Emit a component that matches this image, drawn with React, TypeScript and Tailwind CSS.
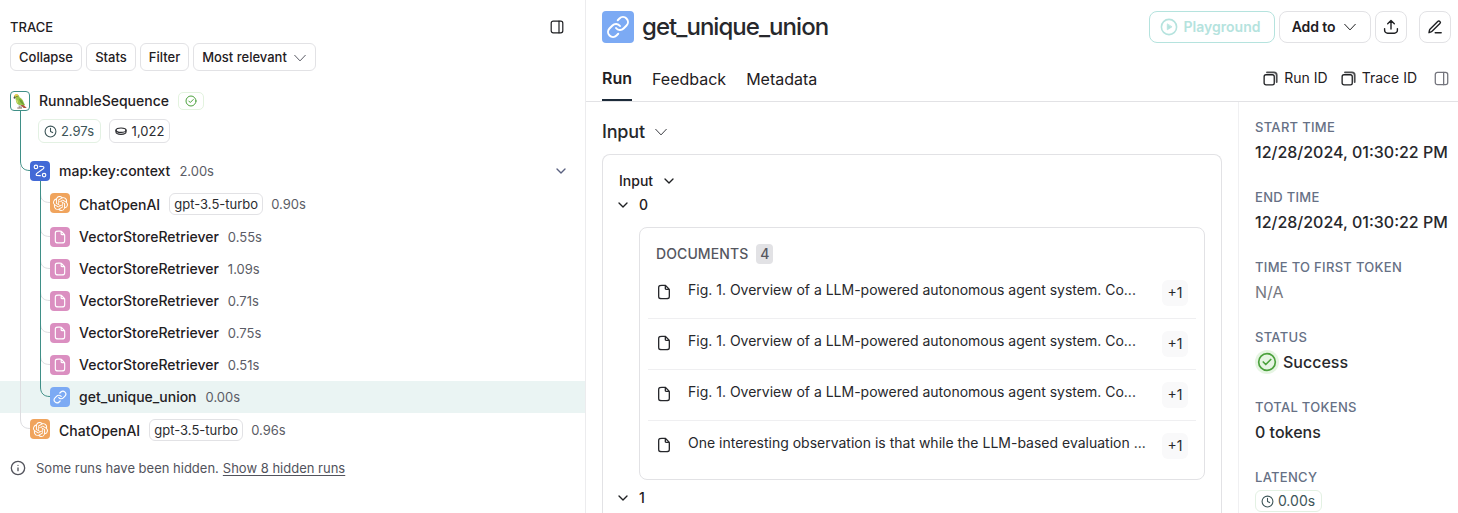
import React from "react";
import { SiOpenai } from "react-icons/si";

type IconProps = { className?: string };

const stroke = {
  fill: "none",
  stroke: "currentColor",
  strokeLinecap: "round" as const,
  strokeLinejoin: "round" as const,
};

const Chevron = ({ className, width = 2 }: IconProps & { width?: number }) => (
  <svg viewBox="0 0 24 24" className={className} {...stroke} strokeWidth={width}>
    <path d="M6 9l6 6 6-6" />
  </svg>
);

const WideChevron = ({ className }: IconProps) => (
  <svg viewBox="0 0 14 14" className={className} {...stroke} strokeWidth={1}>
    <path d="M1.7 4.3L7 9.9l5.3-5.6" />
  </svg>
);

const FileIcon = ({ className }: IconProps) => (
  <svg viewBox="0 0 24 24" className={className} {...stroke} strokeWidth={2}>
    <path d="M14 2.27V6.4c0 .56 0 .84.11 1.05a1 1 0 0 0 .44.44c.21.11.49.11 1.05.11h4.13M20 9.99V17.2c0 1.68 0 2.52-.33 3.16a3 3 0 0 1-1.31 1.31c-.64.33-1.48.33-3.16.33H8.8c-1.68 0-2.52 0-3.16-.33a3 3 0 0 1-1.31-1.31C4 19.72 4 18.88 4 17.2V6.8c0-1.68 0-2.52.33-3.16a3 3 0 0 1 1.31-1.31C6.28 2 7.12 2 8.8 2h3.21c.73 0 1.1 0 1.44.08.31.08.6.2.87.36.3.19.56.45 1.08.96l3.2 3.2c.52.52.78.78.96 1.08.17.27.29.56.36.87.08.34.08.71.08 1.44z" />
  </svg>
);

const LinkIcon = ({ className }: IconProps) => (
  <svg viewBox="0 0 24 24" className={className} {...stroke} strokeWidth={2}>
    <path d="M10 13a5 5 0 0 0 7.54.54l3-3a5 5 0 0 0-7.07-7.07l-1.72 1.71" />
    <path d="M14 11a5 5 0 0 0-7.54-.54l-3 3a5 5 0 0 0 7.07 7.07l1.71-1.71" />
  </svg>
);

const SidebarIcon = ({ className }: IconProps) => (
  <svg viewBox="0 0 14 14" className={className} {...stroke} strokeWidth={1.2}>
    <rect x="1.2" y="1.2" width="11.6" height="11.6" rx="2" />
    <path d="M9 1.2v11.6" />
  </svg>
);

const CopyIcon = ({ className }: IconProps) => (
  <svg viewBox="0 0 16 16" className={className} {...stroke} strokeWidth={1.4}>
    <rect x="1.2" y="4" width="10.8" height="10.8" rx="2" />
    <path d="M4.2 1.4h7.4a3 3 0 0 1 3 3v7.4" strokeWidth={1.9} className="opacity-80" />
  </svg>
);

const ClockIcon = ({ className }: IconProps) => (
  <svg viewBox="0 0 24 24" className={className} {...stroke} strokeWidth={2}>
    <circle cx="12" cy="12" r="10" />
    <path d="M12 6v6l4 2" />
  </svg>
);

const CheckCircle = ({ className, width = 2 }: IconProps & { width?: number }) => (
  <svg viewBox="0 0 24 24" className={className} {...stroke} strokeWidth={width}>
    <circle cx="12" cy="12" r="10" />
    <path d="M7.5 12l3 3 6-6" />
  </svg>
);

const CoinsIcon = ({ className }: IconProps) => (
  <svg viewBox="0 0 12 10" className={className} {...stroke} strokeWidth={1.2}>
    <ellipse cx="6" cy="4.2" rx="5" ry="2.2" />
    <path d="M1 4.2v1.900c0 1.300 2.200 2.200 5 2.200s5-.9 5-2.200V4.200" />
  </svg>
);

const RouteIcon = ({ className }: IconProps) => (
  <svg viewBox="0 0 24 24" className={className} {...stroke} strokeWidth={2}>
    <circle cx="5" cy="5" r="3" />
    <circle cx="19" cy="19" r="3" />
    <path d="M11.5 5h.9c3.2 0 4.8 0 5.4.6a2.5 2.5 0 0 1 .8 2.2c-.1.9-1.4 1.8-4 3.6l-5.1 3.5c-2.6 1.9-3.9 2.8-4 3.7a2.5 2.5 0 0 0 .8 2.2c.6.2 2.2.2 5.4.2h.8" transform="translate(0 -1)" />
  </svg>
);

const InfoIcon = ({ className }: IconProps) => (
  <svg viewBox="0 0 24 24" className={className} {...stroke} strokeWidth={2}>
    <circle cx="12" cy="12" r="10" />
    <path d="M12 16v-4M12 8h.01" />
  </svg>
);

const ParrotIcon = ({ className }: IconProps) => (
  <svg viewBox="0 0 18 18" className={className}>
    <path d="M10.600 11l5 4.800-3.200 0-3.600-3z" fill="#b0523c" />
    <path d="M7.600 13.200l.2 2.400M9.400 13.200l.2 2.400" stroke="#777" strokeWidth=".9" fill="none" />
    <path d="M5.600 15.900h5" stroke="#8a6f5c" strokeWidth="1.100" />
    <path d="M2.200 4.200C2.200 2.200 3.600 1.200 5 1.400c1.800.2 2.700 1.600 3 3.200 2.400 1.200 3.800 3.200 4.400 5.400l1.400 3-3-.4C7.800 13.200 5 12 4.400 9.200 4 7.600 3.900 6.200 3.500 5.200z" fill="#9cc54a" />
    <path d="M7.600 6.200c2.400.8 3.900 2.800 4.700 4.800l1.200 1.900C10 12 7.800 9.800 7.600 6.200z" fill="#6f9f36" />
    <path d="M2.600 2.600c.8-1.400 3-1.600 3.800-.6L5 4.600z" fill="#ecc94a" />
    <path d="M1.600 5.400c0-1.200.5-1.800 1.400-1.800l.8 1-1.200 1.800z" fill="#55554e" />
    <path d="M4.600 6.800c1.400.6 1.900 2.200 1.600 3.800C5 9.800 4.500 8.600 4.600 6.800z" fill="#dbe277" />
    <circle cx="5.200" cy="3.800" r=".55" fill="#333" />
  </svg>
);

const PlayIcon = ({ className }: IconProps) => (
  <svg viewBox="0 0 18 18" className={className} {...stroke} strokeWidth={1.6}>
    <circle cx="9" cy="9" r="7.600" />
    <path d="M7.300 6.200v5.600L11.700 9z" fill="currentColor" strokeWidth={0.8} />
  </svg>
);

const ShareIcon = ({ className }: IconProps) => (
  <svg viewBox="0 0 16 16" className={className} {...stroke} strokeWidth={1.4}>
    <path d="M1.600 9.600v1.600a3 3 0 0 0 3 3h6.800a3 3 0 0 0 3-3V9.600M8 10V1.800M4.700 4.800L8 1.600l3.300 3.200" />
  </svg>
);

const PencilIcon = ({ className }: IconProps) => (
  <svg viewBox="0 0 16 16" className={className} {...stroke} strokeWidth={1.4}>
    <path d="M8.200 13.700h6M2 13.700l.5-2.600c.1-.5.300-.8.700-1.200l7.500-7.500a1.500 1.500 0 0 1 2.200 2.200L5.300 12.100c-.4.4-.7.600-1.200.8z" />
  </svg>
);

function NodeIcon({ kind }: { kind: "openai" | "retriever" | "link" | "map" | "parrot" }) {
  const base = "flex size-5 shrink-0 items-center justify-center rounded-[4px] text-white ";
  if (kind === "openai")
    return <span className={base + "bg-[#f0a45d]"}><SiOpenai className="size-[15px]" /></span>;
  if (kind === "retriever")
    return <span className={base + "bg-[#db8fc1]"}><FileIcon className="size-[14px]" /></span>;
  if (kind === "link")
    return <span className={base + "bg-[#7caaf4]"}><LinkIcon className="size-[14px]" /></span>;
  if (kind === "map")
    return <span className={base + "bg-[#4269d6]"}><RouteIcon className="size-[14px]" /></span>;
  return (
    <span className="flex size-5 shrink-0 items-center justify-center rounded-[4px] border border-[#3f8f87] bg-white">
      <ParrotIcon className="size-[17px]" />
    </span>
  );
}

type Run = {
  kind: "openai" | "retriever" | "link" | "map";
  name: string;
  time: string;
  model?: string;
  depth: 1 | 2;
  selected?: boolean;
  open?: boolean;
};

const runs: Run[] = [
  { kind: "map", name: "map:key:context", time: "2.00s", depth: 1, open: true },
  { kind: "openai", name: "ChatOpenAI", time: "0.90s", model: "gpt-3.5-turbo", depth: 2 },
  { kind: "retriever", name: "VectorStoreRetriever", time: "0.55s", depth: 2 },
  { kind: "retriever", name: "VectorStoreRetriever", time: "1.09s", depth: 2 },
  { kind: "retriever", name: "VectorStoreRetriever", time: "0.71s", depth: 2 },
  { kind: "retriever", name: "VectorStoreRetriever", time: "0.75s", depth: 2 },
  { kind: "retriever", name: "VectorStoreRetriever", time: "0.51s", depth: 2 },
  { kind: "link", name: "get_unique_union", time: "0.00s", depth: 2, selected: true },
  { kind: "openai", name: "ChatOpenAI", time: "0.96s", model: "gpt-3.5-turbo", depth: 1 },
];

function RunRow({ run }: { run: Run }) {
  return (
    <div
      className={
        "flex items-start pt-1.5 " +
        (run.model ? "h-[34px] " : "h-8 ") +
        (run.depth === 1 ? "pl-[30px] " : "pl-[50px] ") +
        (run.selected ? "bg-[#eaf4f3]" : "")
      }
    >
      <NodeIcon kind={run.kind} />
      <div className={"ml-[9px] flex items-center " + (run.model ? "h-[22px]" : "h-5")}>
        <span className={"text-sm font-medium text-[#1f2023] " + (run.model ? "pt-px" : "")}>{run.name}</span>
        {run.model && (
          <span className="ml-[9px] flex h-[22px] w-[94px] items-center justify-center rounded-md border border-[#e2e2e5] pt-px text-[13px] text-[#2b2c30]">
            {run.model}
          </span>
        )}
        <span className={"pt-px text-[13px] text-[#5b5c66] " + (run.model ? "ml-2" : "ml-[9px]")}>{run.time}</span>
      </div>
      {run.open && <Chevron className="mt-[2px] mr-4 ml-auto size-4 text-[#5a6180]" />}
    </div>
  );
}

function Connectors() {
  return (
    <svg className="pointer-events-none absolute top-[111px] left-0 h-[330px] w-[60px]" viewBox="0 111 60 330" fill="none" strokeWidth="1">
      <path d="M20.500 166V419c0 6 3 9.500 9.500 9.500" stroke="#dddde0" />
      {[202.5, 236.5, 268.5, 300.5, 332.5, 364.5].map((y) => (
        <path key={y} d={`M40.500 ${y - 9}c0 6 3 9 9.500 9`} stroke="#dddde0" />
      ))}
      <path d="M20.500 111V161c0 6 3 9.500 9.500 9.500M40.500 181V387c0 6 3 9.500 9.500 9.500" stroke="#3f8f87" />
    </svg>
  );
}

const smallButton =
  "flex h-7 items-center justify-center rounded-md border border-[#e2e2e5] pt-px text-[13px] font-medium text-[#1f2023] ";

function TracePanel() {
  return (
    <aside className="relative flex w-[586px] shrink-0 flex-col border-r border-[#ececee]">
      <div className="flex h-[43px] items-center pt-[11px] pr-[21px] pl-[10px]">
        <span className="pt-px text-[13px] font-medium text-[#1f2023]">TRACE</span>
        <SidebarIcon className="ml-auto size-[14px] text-[#1f2023]" />
      </div>
      <div className="flex gap-1 pl-[10px]">
        <button className={smallButton + "w-[72px]"}>Collapse</button>
        <button className={smallButton + "w-[50px]"}>Stats</button>
        <button className={smallButton + "w-[49px]"}>Filter</button>
        <button className={smallButton + "w-[123px] gap-1.5"}>
          Most relevant
          <WideChevron className="size-[14px] text-[#5b5c66]" />
        </button>
      </div>
      <div className="mt-5 flex h-16 pl-[10px]">
        <NodeIcon kind="parrot" />
        <div className="ml-[9px] flex flex-col">
          <div className="flex h-5 items-center">
            <span className="text-sm font-medium text-[#1f2023]">RunnableSequence</span>
            <span className="ml-[9px] flex h-[18px] w-[26px] items-center justify-center rounded-[5px] border border-[#e3f3df] text-[#4ba13c]">
              <CheckCircle className="size-[12px]" />
            </span>
          </div>
          <div className="mt-2 -ml-px flex gap-2">
            <span className="flex h-6 w-[63px] items-center justify-center gap-1 rounded-md border border-[#e3f1e3] pr-px text-[13px] text-[#3d5558]">
              <ClockIcon className="size-[13px]" />
              <span className="pt-px">2.97s</span>
            </span>
            <span className="flex h-6 w-[61px] items-center justify-center gap-[5px] rounded-md border border-[#e2e2e5] text-[13px] text-[#2b2c30]">
              <CoinsIcon className="h-[10px] w-3" />
              <span className="pt-px">1,022</span>
            </span>
          </div>
        </div>
      </div>
      <div className="flex flex-col">
        {runs.map((run, i) => (
          <RunRow key={i} run={run} />
        ))}
      </div>
      <div className="mt-[11px] flex h-5 items-center pl-[10px] text-[13px] text-[#52535c]">
        <InfoIcon className="mr-[10px] size-4" />
        <span className="pt-px">Some runs have been hidden.</span>
        <span className="ml-1 pt-px underline underline-offset-2">Show 8 hidden runs</span>
      </div>
      <Connectors />
    </aside>
  );
}

const actionButton = "flex h-8 items-center justify-center rounded-lg border border-[#e2e2e5] text-[#1f2023] ";

function Header() {
  return (
    <header className="flex h-[102px] flex-col border-b border-[#e2e2e5] pt-[11px] pl-4">
      <div className="flex h-8 items-center">
        <span className="flex size-8 items-center justify-center rounded-[4px] bg-[#7caaf4] text-white">
          <LinkIcon className="size-6" />
        </span>
        <h1 className="ml-2 text-2xl font-medium tracking-[-0.96px] text-[#27282c]">get_unique_union</h1>
        <div className="mr-[7px] ml-auto flex">
          <button className="flex h-8 w-[126px] items-center justify-center gap-1.5 rounded-lg border border-[#b5e3de] pr-1 text-sm font-semibold text-[#b5e3de]">
            <PlayIcon className="size-[18px]" />
            Playground
          </button>
          <button className={actionButton + "ml-1 w-[92px] gap-2 pr-px text-sm font-semibold tracking-[-0.1px]"}>
            Add to
            <WideChevron className="size-[14px]" />
          </button>
          <button className={actionButton + "ml-1 w-8"}>
            <ShareIcon className="size-4" />
          </button>
          <button className={actionButton + "ml-3 w-8"}>
            <PencilIcon className="size-4" />
          </button>
        </div>
      </div>
      <div className="mt-auto flex h-[44px] text-base text-[#1f2023]">
        <span className="flex w-[30px] items-center justify-center border-b-2 border-[#1d2b3a] font-semibold">Run</span>
        <span className="ml-5 flex items-center">Feedback</span>
        <span className="ml-5 flex items-center">Metadata</span>
        <div className="mr-[9px] ml-auto flex h-[42px] items-center text-sm">
          <CopyIcon className="mr-[6px] size-[15px]" />
          Run ID
          <CopyIcon className="mr-[6px] ml-[13px] size-[15px]" />
          Trace ID
          <SidebarIcon className="ml-[17px] size-[15px] text-[#74757d]" />
        </div>
      </div>
    </header>
  );
}

const documents = [
  "Fig. 1. Overview of a LLM-powered autonomous agent system. Co...",
  "Fig. 1. Overview of a LLM-powered autonomous agent system. Co...",
  "Fig. 1. Overview of a LLM-powered autonomous agent system. Co...",
  "One interesting observation is that while the LLM-based evaluation ...",
];

function Documents() {
  return (
    <section className="mt-3 ml-5 h-[253px] w-[566px] shrink-0 rounded-lg border border-[#e2e2e5] px-2 pt-4">
      <div className="flex h-5 items-center pl-2 text-sm font-medium tracking-[0.1px] text-[#56575f]">
        DOCUMENTS
        <span className="ml-2 flex h-5 w-[17px] items-center justify-center rounded-[4px] bg-[#e2e2e5]">4</span>
      </div>
      <ul className="mt-1">
        {documents.map((text, i) => (
          <li
            key={i}
            className="flex h-[51px] items-center border-b border-[#efeff1] px-2 text-sm text-[#27282c] last:border-transparent"
          >
            <FileIcon className="-mt-0.5 size-4" />
            <span className="mt-[-6px] ml-4">{text}</span>
            <span className="ml-auto flex size-[26px] items-center justify-center rounded-md bg-[#f9f9fa]">+1</span>
          </li>
        ))}
      </ul>
    </section>
  );
}

function MainContent() {
  return (
    <main className="flex w-[652px] shrink-0 flex-col overflow-hidden pt-4 pl-4">
      <div className="flex h-7 items-center gap-[9px] text-lg font-medium tracking-[-0.2px] text-[#27282c]">
        Input
        <WideChevron className="size-[14px] text-[#3c3d43]" />
      </div>
      <div className="mt-2 flex w-[620px] flex-1 flex-col rounded-t-lg border border-b-0 border-[#e2e2e5] pt-4 pl-4 text-sm text-[#1f2023]">
        <div className="flex h-5 shrink-0 items-center gap-2 font-medium">
          Input
          <Chevron className="size-4" />
        </div>
        <div className="mt-1 flex h-5 shrink-0 items-center font-medium">
          <Chevron className="mr-1 -ml-1 size-4" />
          <span className="ml-1">0</span>
        </div>
        <Documents />
        <div className="mt-2 flex h-5 shrink-0 items-center font-medium">
          <Chevron className="mr-1 -ml-1 size-4" />
          <span className="ml-1">1</span>
        </div>
      </div>
    </main>
  );
}

function Field({ label, children }: { label: string; children: React.ReactNode }) {
  return (
    <div className="flex h-[70px] shrink-0 flex-col">
      <span className="h-5 text-[13px] leading-5 font-medium tracking-[0.3px] text-[#667085]">{label}</span>
      <div className="mt-[3px] flex h-6 items-center text-base font-medium whitespace-nowrap text-[#27282c]">{children}</div>
    </div>
  );
}

function Details() {
  return (
    <aside className="flex flex-1 flex-col overflow-hidden border-l border-[#f0f0f2] pt-[15px] pl-4">
      <Field label="START TIME">12/28/2024, 01:30:22 PM</Field>
      <Field label="END TIME">12/28/2024, 01:30:22 PM</Field>
      <Field label="TIME TO FIRST TOKEN">
        <span className="font-normal text-[#77787f]">N/A</span>
      </Field>
      <Field label="STATUS">
        <span className="mr-1 flex size-6 items-center justify-center rounded-full bg-[#e6f5e3] text-[#4ba13c]">
          <CheckCircle className="size-5" />
        </span>
        Success
      </Field>
      <Field label="TOTAL TOKENS">0 tokens</Field>
      <Field label="LATENCY">
        <span className="-mt-0.5 flex h-[22px] w-[67px] items-center justify-center gap-1 rounded-md border border-[#e3f1e3] pr-px text-sm font-normal text-[#3d5558]">
          <ClockIcon className="size-[13px]" />
          0.00s
        </span>
      </Field>
    </aside>
  );
}

export default function App() {
  return (
    <div className="flex h-[513px] w-[1458px] overflow-hidden bg-white font-['Inter',sans-serif]">
      <TracePanel />
      <div className="flex min-w-0 flex-1 flex-col">
        <Header />
        <div className="flex min-h-0 flex-1">
          <MainContent />
          <Details />
        </div>
      </div>
    </div>
  );
}
